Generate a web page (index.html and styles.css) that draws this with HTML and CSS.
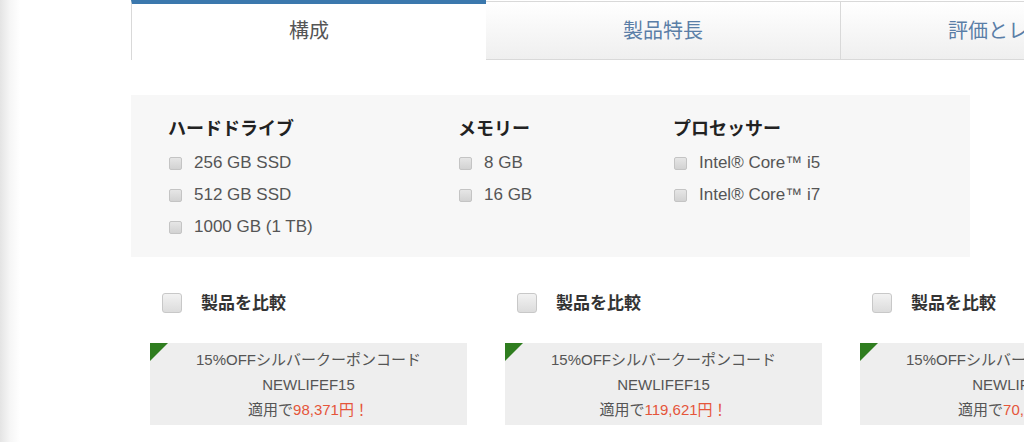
FILE: index.html
```html
<!DOCTYPE html>
<html lang="ja">
<head>
    <meta charset="UTF-8">
    <title>構成</title>
    <link rel="stylesheet" href="styles.css">
</head>
<body>
    <div class="page">
        <!-- タブ -->
        <nav class="tabs">
            <a class="tab active">構成</a>
            <a class="tab">製品特長</a>
            <a class="tab">評価とレビュー</a>
        </nav>

        <!-- フィルター -->
        <section class="filters">
            <div class="filter-group">
                <h3>ハードドライブ</h3>
                <label class="option"><span class="box"></span>256 GB SSD</label>
                <label class="option"><span class="box"></span>512 GB SSD</label>
                <label class="option"><span class="box"></span>1000 GB (1 TB)</label>
            </div>
            <div class="filter-group">
                <h3>メモリー</h3>
                <label class="option"><span class="box"></span>8 GB</label>
                <label class="option"><span class="box"></span>16 GB</label>
            </div>
            <div class="filter-group">
                <h3>プロセッサー</h3>
                <label class="option"><span class="box"></span>Intel® Core™ i5</label>
                <label class="option"><span class="box"></span>Intel® Core™ i7</label>
            </div>
        </section>

        <!-- 製品 -->
        <section class="products">
            <article class="product">
                <label class="compare"><span class="compare-box"></span><span class="compare-label">製品を比較</span></label>
                <div class="coupon">
                    <p>15%OFFシルバークーポンコード</p>
                    <p>NEWLIFEF15</p>
                    <p>適用で<span class="price">98,371円！</span></p>
                </div>
            </article>
            <article class="product">
                <label class="compare"><span class="compare-box"></span><span class="compare-label">製品を比較</span></label>
                <div class="coupon">
                    <p>15%OFFシルバークーポンコード</p>
                    <p>NEWLIFEF15</p>
                    <p>適用で<span class="price">119,621円！</span></p>
                </div>
            </article>
            <article class="product">
                <label class="compare"><span class="compare-box"></span><span class="compare-label">製品を比較</span></label>
                <div class="coupon">
                    <p>15%OFFシルバークーポンコード</p>
                    <p>NEWLIFEF15</p>
                    <p>適用で<span class="price">70,550円！</span></p>
                </div>
            </article>
        </section>
    </div>
</body>
</html>
```

FILE: styles.css
```css
:root {
    --tab-border: #d9d9d9;
    --text-gray: #555555;
    --tab-blue: #3b78ad;
    --panel-bg: #f7f7f7;
    --coupon-bg: #eeeeee;
    --price-color: #e5553a;
    --ribbon: #2f7d1f;
}
html, body {
    overflow: hidden;
}
body {
    margin: 0;
    width: 1024px;
    height: 442px;
    font-family: "Liberation Sans", "Noto Sans CJK JP", sans-serif;
    color: var(--text-gray);
    background: #fff linear-gradient(to right, #e4e4e4 0, #f6f6f6 10px, #ffffff 20px) no-repeat;
    background-size: 20px 100%;
}
.page {
    padding: 1px 0 0 131px;
}
/* タブ */
.tabs {
    display: flex;
    width: 1100px;
}
.tab {
    flex: 0 0 355px;
    box-sizing: border-box;
    height: 59px;
    display: flex;
    align-items: center;
    justify-content: center;
    font-size: 20px;
    color: #5a7ea7;
    background: linear-gradient(to bottom, #ffffff 0%, #efefef 100%);
    border: 1px solid var(--tab-border);
    border-left: none;
    padding-bottom: 2px;
}
.tab.active {
    color: var(--text-gray);
    background: #fff;
    border-top: 4px solid var(--tab-blue);
    border-left: 1px solid var(--tab-border);
    border-right: none;
    border-bottom: none;
    padding-bottom: 5px;
    margin-top: -1px;
    height: 60px;
}
/* フィルター */
.filters {
    margin-top: 35px;
    width: 839px;
    box-sizing: border-box;
    background: var(--panel-bg);
    padding: 22px 37px 14px;
    display: grid;
    grid-template-columns: 290px 215px 1fr;
}
.filter-group h3 {
    margin: 0 0 6px;
    font-size: 18px;
    line-height: 24px;
    color: #222;
    font-weight: 700;
}
.option {
    display: flex;
    align-items: center;
    height: 32px;
    font-size: 17px;
}
.box {
    width: 11px;
    height: 11px;
    margin: 0 12px 0 1px;
    border: 1px solid #c4c4c4;
    border-radius: 2px;
    background: linear-gradient(to bottom, #e6e6e6, #d2d2d2);
}
/* 製品 */
.products {
    display: flex;
    gap: 38px;
    margin-top: 36px;
    padding-left: 19px;
    width: 1200px;
}
.product {
    flex: 0 0 317px;
}
.compare {
    display: flex;
    align-items: center;
    height: 20px;
    padding-left: 12px;
    font-size: 17px;
    font-weight: 700;
    color: #333;
}
.compare-box {
    width: 18px;
    height: 18px;
    margin-right: 19px;
    border: 1px solid #c8c8c8;
    border-radius: 3px;
    background: linear-gradient(to bottom, #f2f2f2, #dcdcdc);
}
.compare-label {
    margin-bottom: 3px;
}
.coupon {
    position: relative;
    margin-top: 30px;
    background: var(--coupon-bg);
    padding: 4px 0 3px;
    text-align: center;
    font-size: 15px;
    line-height: 25px;
}
.coupon::before {
    content: "";
    position: absolute;
    top: 0;
    left: 0;
    border-top: 18px solid var(--ribbon);
    border-right: 18px solid transparent;
}
.coupon p {
    margin: 0;
}
.price {
    color: var(--price-color);
}
```
